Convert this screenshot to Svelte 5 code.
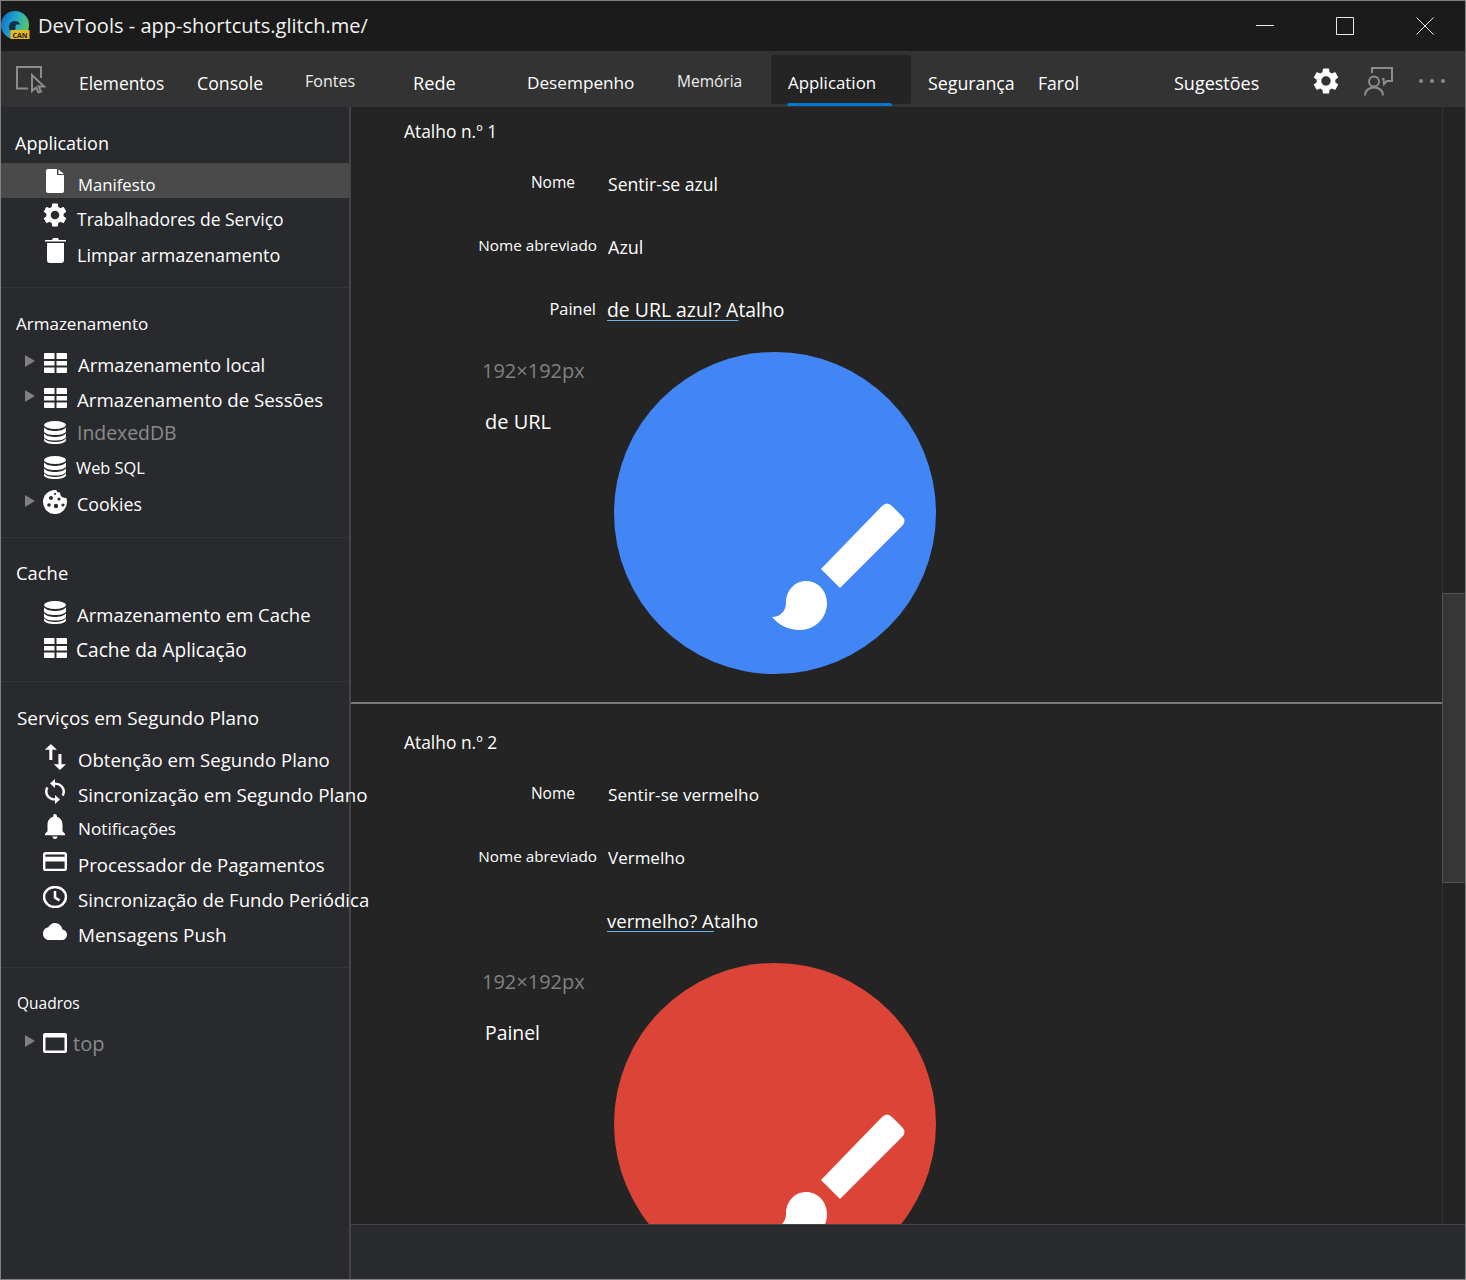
<script>
  const tabs = [
    { label: 'Elementos', w: 118, fs: 17.4 },
    { label: 'Console', w: 108, fs: 17.7 },
    { label: 'Fontes', w: 108, fs: 16, cls: 'sm' },
    { label: 'Rede', w: 114, fs: 18.2 },
    { label: 'Desempenho', w: 150, fs: 17.2 },
    { label: 'Memória', w: 111, fs: 15.5, cls: 'sm' },
    { label: 'Application', w: 140, fs: 16.9, cls: 'active' },
    { label: 'Segurança', w: 110, fs: 17.8 },
    { label: 'Farol', w: 136, fs: 17.6 },
    { label: 'Sugestões', w: 120, fs: 18 }
  ];

  const groups = [
    {
      title: 'Application', fs: 18, cls: 'first', pad: 19,
      rows: [
        { icon: 'file', label: 'Manifesto', fs: 16.7, active: true, dy: 4, dx: 1 },
        { icon: 'gear', label: 'Trabalhadores de Serviço', fs: 17.5, dy: 3 },
        { icon: 'trash', label: 'Limpar armazenamento', fs: 18.1, dy: 4 }
      ]
    },
    {
      title: 'Armazenamento', fs: 17, cls: 'low', pad: 17,
      rows: [
        { icon: 'table', label: 'Armazenamento local', fs: 18.4, arrow: true, dy: 2, dx: 1 },
        { icon: 'table', label: 'Armazenamento de Sessões', fs: 18.7, arrow: true, dy: 2 },
        { icon: 'db', label: 'IndexedDB', fs: 19.4, cls: 'dim', dy: 0 },
        { icon: 'db', label: 'Web SQL', fs: 16.4, dy: 0, dx: -1 },
        { icon: 'cookie', label: 'Cookies', fs: 17.8, arrow: true, dy: 1.5 }
      ]
    },
    {
      title: 'Cache', fs: 18.4, pad: 16,
      rows: [
        { icon: 'db', label: 'Armazenamento em Cache', fs: 18.5, dy: 2 },
        { icon: 'table', label: 'Cache da Aplicação', fs: 19.1, dy: 2, dx: -1 }
      ]
    },
    {
      title: 'Serviços em Segundo Plano', fs: 18.9, cls: 'wide low', pad: 18,
      rows: [
        { icon: 'arrows', label: 'Obtenção em Segundo Plano', fs: 18.6, dy: 3, dx: 1 },
        { icon: 'sync', label: 'Sincronização em Segundo Plano', fs: 18.8, dy: 3, dx: 1 },
        { icon: 'bell', label: 'Notificações', fs: 17.2, dy: 2.5, dx: 1 },
        { icon: 'card', label: 'Processador de Pagamentos', fs: 18.6, dy: 3, dx: 1 },
        { icon: 'clock', label: 'Sincronização de Fundo Periódica', fs: 18.6, dy: 3, dx: 1 },
        { icon: 'cloud', label: 'Mensagens Push', fs: 18.9, dy: 3, dx: 1 }
      ]
    },
    {
      title: 'Quadros', fs: 15.5, cls: 'wide', pad: 0,
      rows: [{ icon: 'frame', label: 'top', fs: 20, arrow: true, cls: 'dim', dy: 1, dx: -4 }]
    }
  ];

  const shortcuts = [
    {
      title: 'Atalho n.º 1', name: 'Sentir-se azul', nameFs: 17.6, short: 'Azul', shortFs: 18, urlLabel: 'Painel',
      linked: 'de URL azul? A', rest: 'talho', linkFs: 19.4, side: 'de URL', sideFs: 20, fill: '#4285f4'
    },
    {
      title: 'Atalho n.º 2', name: 'Sentir-se vermelho', nameFs: 17.2, short: 'Vermelho', shortFs: 17, urlLabel: '',
      linked: 'vermelho? A', rest: 'talho', linkFs: 18.6, side: 'Painel', sideFs: 19.4, fill: '#db4437'
    }
  ];

  const gearPath = 'M19.14 12.94c.04-.3.06-.61.06-.94 0-.32-.02-.64-.07-.94l2.03-1.58c.18-.14.23-.41.12-.61l-1.92-3.32c-.12-.22-.37-.29-.59-.22l-2.39.96c-.5-.38-1.03-.7-1.62-.94l-.36-2.54c-.04-.24-.24-.41-.48-.41h-3.84c-.24 0-.43.17-.47.41l-.36 2.54c-.59.24-1.13.57-1.62.94l-2.39-.96c-.22-.08-.47 0-.59.22L2.74 8.87c-.12.21-.08.47.12.61l2.03 1.58c-.05.3-.09.63-.09.94s.02.64.07.94l-2.03 1.58c-.18.14-.23.41-.12.61l1.92 3.32c.12.22.37.29.59.22l2.39-.96c.5.38 1.03.7 1.62.94l.36 2.54c.05.24.24.41.48.41h3.84c.24 0 .44-.17.47-.41l.36-2.54c.59-.24 1.13-.56 1.62-.94l2.39.96c.22.08.47 0 .59-.22l1.92-3.32c.12-.22.07-.47-.12-.61l-2.01-1.58zM12 15.6c-1.98 0-3.6-1.62-3.6-3.6s1.62-3.6 3.6-3.6 3.6 1.62 3.6 3.6-1.62 3.6-3.6 3.6z';
</script>

{#snippet icon(name)}
  {#if name === 'file'}
    <svg width="18" height="24" viewBox="0 0 18 24"><path d="M2 0h9v6h7v16a2 2 0 0 1-2 2H2a2 2 0 0 1-2-2V2a2 2 0 0 1 2-2zM12.5 0.5 18 5h-5.5z" /></svg>
  {:else if name === 'gear'}
    <svg class="lift" width="24" height="24" viewBox="2.3 2 19.4 20"><path d={gearPath} /></svg>
  {:else if name === 'trash'}
    <svg width="21" height="25" viewBox="0 0 21 25"><path d="M2 5h17v17a3 3 0 0 1-3 3H5a3 3 0 0 1-3-3zM0 2h7l1-2h5l1 2h7v1.500H0z" /></svg>
  {:else if name === 'table'}
    <svg class="shift" width="23" height="20" viewBox="0 0 23 20"><path d="M1 0h9.500v6H0V1a1 1 0 0 1 1-1zM12.500 0H22a1 1 0 0 1 1 1v5H12.500zM0 8h10.500v4.500H0zM12.500 8H23v4.500H12.500zM0 14.500h10.500V20H1a1 1 0 0 1-1-1zM12.500 14.500H23V19a1 1 0 0 1-1 1h-9.500z" /></svg>
  {:else if name === 'db'}
    <svg width="22" height="23" viewBox="0 0 22 23"><ellipse cx="11" cy="4" rx="11" ry="4" /><path d="M0 6.500C2 9 7 10 11 10s9-1 11-3.500V10c0 2.500-5 4-11 4S0 12.500 0 10zM0 12.500C2 15 7 16 11 16s9-1 11-3.500V15.500c0 2.500-5 4-11 4s-11-1.500-11-4zM0 17.500C2 20 7 21 11 21s9-1 11-3.500V19c0 2.500-5 4-11 4S0 21.500 0 19z" /></svg>
  {:else if name === 'cookie'}
    <svg class="lift" width="24" height="24" viewBox="0 0 24 24"><circle cx="12" cy="12" r="12" /><g class="cut"><circle cx="22" cy="3" r="5" /><circle cx="16" cy="0" r="2.500" /><circle cx="8" cy="8" r="2" /><circle cx="16" cy="9" r="1.600" /><circle cx="6" cy="15" r="1.800" /><circle cx="13" cy="16" r="2.200" /><circle cx="20" cy="15" r="1.600" /><circle cx="12" cy="4" r="1.100" /></g></svg>
  {:else if name === 'arrows'}
    <svg width="22" height="26" viewBox="4.500 3 14.500 18" preserveAspectRatio="none"><path d="M16 17.010V10h-2v7.010h-3L15 21l4-3.990h-3zM9 3L5 6.990h3V14h2V6.990h3L9 3z" /></svg>
  {:else if name === 'sync'}
    <svg width="20" height="25" viewBox="4 1 16 22" preserveAspectRatio="none"><path d="M12 4V1L8 5l4 4V6c3.310 0 6 2.690 6 6 0 1.010-.25 1.970-.7 2.800l1.460 1.460C19.540 15.030 20 13.570 20 12c0-4.420-3.580-8-8-8zm0 14c-3.310 0-6-2.690-6-6 0-1.010.25-1.970.7-2.800L5.240 7.740C4.460 8.970 4 10.430 4 12c0 4.420 3.580 8 8 8v3l4-4-4-4v3z" /></svg>
  {:else if name === 'bell'}
    <svg width="20" height="25" viewBox="4 2.500 16 19.500" preserveAspectRatio="none"><path d="M12 22c1.100 0 2-.9 2-2h-4c0 1.100.89 2 2 2zm6-6v-5c0-3.070-1.640-5.640-4.500-6.320V4c0-.83-.67-1.500-1.500-1.500s-1.500.67-1.500 1.500v.68C7.630 5.360 6 7.920 6 11v5l-2 2v1h16v-1l-2-2z" /></svg>
  {:else if name === 'card'}
    <svg width="24" height="19" viewBox="2 4 20 16" preserveAspectRatio="none"><path d="M20 4H4c-1.110 0-1.990.89-1.990 2L2 18c0 1.110.89 2 2 2h16c1.110 0 2-.89 2-2V6c0-1.110-.89-2-2-2zm0 14H4v-6h16v6zm0-10H4V6h16v2z" /></svg>
  {:else if name === 'clock'}
    <svg width="24" height="22" viewBox="0 0 24 22" class="line"><ellipse cx="12" cy="11" rx="11" ry="10" /><path d="M12 5v6.500l4.500 3" /></svg>
  {:else if name === 'cloud'}
    <svg width="24" height="17" viewBox="0 4 24 16" preserveAspectRatio="none"><path d="M19.350 10.040C18.670 6.590 15.640 4 12 4 9.110 4 6.600 5.640 5.350 8.040 2.340 8.360 0 10.910 0 14c0 3.310 2.690 6 6 6h13c2.760 0 5-2.240 5-5 0-2.640-2.050-4.780-4.650-4.960z" /></svg>
  {:else if name === 'frame'}
    <svg width="24" height="20" viewBox="0 0 24 20"><path d="M2 0h20a2 2 0 0 1 2 2v16a2 2 0 0 1-2 2H2a2 2 0 0 1-2-2V2a2 2 0 0 1 2-2zM2.500 4.500v13h19v-13z" fill-rule="evenodd" /></svg>
  {/if}
{/snippet}

{#snippet appIcon(fill)}
  <svg class="shortcut-icon" width="322" height="322" viewBox="0 0 322 322">
    <circle cx="161" cy="161" r="161" {fill} />
    <path fill="#fff" d="M268 154 Q273 149 278 154 L288 164 Q293 169 288 174 L226 236 L207 217 Z" />
    <path fill="#fff" d="M158 265C166 265 172 259 172 251C172 238 181 229 192 229C204 229 213 239 213 251C213 266 201 278 186 278C174 278 165 273 158 265Z" />
  </svg>
{/snippet}

<div class="window">
  <header class="titlebar">
    <svg class="logo" width="29" height="29" viewBox="0 0 29 29">
      <defs>
        <linearGradient id="edge" x1="0" y1="0.300" x2="1" y2="0.600">
          <stop offset="0" stop-color="#1270c4" />
          <stop offset="0.500" stop-color="#23a9c9" />
          <stop offset="1" stop-color="#5cc85c" />
        </linearGradient>
      </defs>
      <circle cx="14" cy="14" r="14" fill="url(#edge)" />
      <path fill="#16304a" d="M8 16c0-4 3-6 6-6s5 2 5 4c-1-1-3-1-4 0s0 3-1 5-2 4-3 3-3-3-3-6z" />
      <rect x="9.500" y="19" width="19" height="9" fill="#e8b81f" />
      <text x="19" y="26.500" class="badge">CAN</text>
    </svg>
    <span class="doc-title">DevTools - app-shortcuts.glitch.me/</span>
    <div class="win-controls">
      <svg width="18" height="18" viewBox="0 0 18 18"><path d="M0 8.500h18" /></svg>
      <svg width="18" height="18" viewBox="0 0 18 18"><path d="M.5.500h17v17H.5z" /></svg>
      <svg width="18" height="18" viewBox="0 0 18 18"><path d="M.5.500l17 17M17.500.500l-17 17" /></svg>
    </div>
  </header>

  <nav class="toolbar">
    <div class="inspect">
      <svg width="30" height="28" viewBox="0 0 30 28"><path class="stroke" d="M12 22.500H1V1h24v11" /><path class="stroke" d="M16 9v16l4-3.500 2.500 5 2.500-1-2.500-5H28z" /></svg>
    </div>
    {#each tabs as tab}
      <div class="tab {tab.cls ?? ''}" style="width:{tab.w}px;font-size:{tab.fs}px"><span>{tab.label}</span></div>
    {/each}
    <div class="tools">
      <svg class="tool-gear" width="26" height="26" viewBox="2.300 2 19.400 20"><path d={gearPath} /></svg>
      <svg class="tool-feedback" width="29" height="29" viewBox="0 0 29 29"><path d="M8 6V1h20v13h-5l-3 3-.500-5H18" /><circle cx="10" cy="14.500" r="5" /><path d="M1 28.500c0-5 4-8 9-8s9 3 9 8" /></svg>
      <div class="dots"><i></i><i></i><i></i></div>
    </div>
  </nav>

  <div class="body">
    <aside class="sidebar">
      {#each groups as group}
        <section class="group" style="padding-bottom:{group.pad}px">
          <h3 class={group.cls ?? ''} style="font-size:{group.fs}px">{group.title}</h3>
          {#each group.rows as row}
            <div class="row" class:active={row.active}>
              <span class="arrow">{#if row.arrow}<i></i>{/if}</span>
              <span class="ico">{@render icon(row.icon)}</span>
              <span class="label {row.cls ?? ''}" style="margin:{row.dy * 2}px 0 0 {row.dx ?? 0}px;font-size:{row.fs}px">{row.label}</span>
            </div>
          {/each}
        </section>
      {/each}
    </aside>

    <main class="main">
      <div class="pane">
        <div class="scroll">
          <div class="sheet">
            {#each shortcuts as s}
              <section class="shortcut">
                <div class="sc-title">{s.title}</div>
                <div class="field">
                  <span class="key indent">Nome</span>
                  <span class="val" style="font-size:{s.nameFs}px">{s.name}</span>
                </div>
                <div class="field">
                  <span class="key abbr">Nome abreviado</span>
                  <span class="val" style="font-size:{s.shortFs}px">{s.short}</span>
                </div>
                <div class="field">
                  <span class="key tight">{s.urlLabel}</span>
                  <span class="val link" style="font-size:{s.linkFs}px"><u>{s.linked}</u>{s.rest}</span>
                </div>
                <div class="icon-row">
                  <div class="icon-meta">
                    <div class="px">192×192px</div>
                    <div class="side" style="font-size:{s.sideFs}px">{s.side}</div>
                  </div>
                  {@render appIcon(s.fill)}
                </div>
              </section>
            {/each}
          </div>
        </div>
        <div class="scrollbar"><div class="thumb"></div></div>
      </div>
      <div class="footer"></div>
    </main>
  </div>
</div>

<style>
  :global(body) {
    margin: 0;
    background: #242424;
  }

  .window {
    box-sizing: border-box;
    width: 1466px;
    height: 1280px;
    display: flex;
    flex-direction: column;
    border: 1px solid #808080;
    color: #fff;
    font-family: "Open Sans", "Noto Sans", sans-serif;
    font-size: 18px;
    overflow: hidden;
  }

  .titlebar {
    height: 50px;
    flex: none;
    display: flex;
    align-items: center;
    background: #1b1b1b;
  }

  .logo {
    flex: none;
    margin-top: -2px;
  }

  .badge {
    font-size: 7px;
    font-weight: 700;
    fill: #222;
    text-anchor: middle;
  }

  .doc-title {
    margin: -2px 0 0 8px;
    font-size: 20.05px;
    color: #f2f2f2;
  }

  .win-controls {
    margin-left: auto;
    display: flex;
    gap: 62px;
    padding-right: 31px;
  }

  .win-controls path {
    fill: none;
    stroke: #e8e8e8;
    stroke-width: 1;
  }

  .toolbar {
    height: 56px;
    flex: none;
    display: flex;
    background: #333;
  }

  .inspect {
    width: 61px;
    flex: none;
    padding: 15px 0 0 15px;
    box-sizing: border-box;
  }

  .stroke {
    fill: none;
    stroke: #8c8c8c;
    stroke-width: 2;
  }

  .tab {
    flex: none;
    box-sizing: border-box;
    padding: 20px 0 0 17px;
    line-height: 24px;
    white-space: nowrap;
    position: relative;
  }

  .tab.sm {
    padding-top: 18px;
    color: #eee;
  }

  .tab.active {
    background: #242424;
    height: 49px;
    margin-top: 4px;
    padding-top: 16px;
    border-radius: 3px;
  }

  .tab.active::after {
    content: "";
    position: absolute;
    left: 16px;
    right: 19px;
    bottom: -2px;
    height: 3px;
    border-radius: 2px;
    background: #0078d4;
  }

  .tools {
    margin-left: auto;
    display: flex;
    align-items: center;
    padding-right: 20px;
  }

  .tool-gear {
    fill: #fff;
    margin: 4px 0 0 0;
  }

  .tool-feedback {
    margin: 4px 0 0 25px;
  }

  .tool-feedback path,
  .tool-feedback circle {
    fill: none;
    stroke: #8c8c8c;
    stroke-width: 2;
  }

  .dots {
    display: flex;
    gap: 7px;
    margin: 4px 0 0 26px;
  }

  .dots i {
    width: 4px;
    height: 4px;
    border-radius: 50%;
    background: #8c8c8c;
  }

  .body {
    flex: 1;
    min-height: 0;
    display: flex;
  }

  .sidebar {
    width: 350px;
    flex: none;
    box-sizing: border-box;
    background: #292a2d;
    border-right: 2px solid #454545;
    position: relative;
    z-index: 1;
  }

  .group {
    border-bottom: 1px solid #333438;
  }

  .group:last-child {
    border-bottom: none;
  }

  h3 {
    margin: 0;
    height: 57px;
    box-sizing: border-box;
    padding: 25px 0 0 15px;
    font-weight: 400;
    line-height: 20px;
  }

  h3.first {
    height: 56px;
    padding: 26px 0 0 14px;
  }

  h3.low {
    padding-top: 26px;
  }

  h3.wide {
    padding-left: 16px;
  }

  .row {
    height: 35px;
    display: flex;
    align-items: center;
    padding-left: 24px;
    white-space: nowrap;
  }

  .row.active {
    background: #4a4a4a;
  }

  .arrow {
    width: 18px;
    flex: none;
    display: flex;
    margin-top: -3px;
  }

  .arrow i {
    width: 0;
    height: 0;
    border-left: 10px solid #7f7f7f;
    border-top: 6.5px solid transparent;
    border-bottom: 6.5px solid transparent;
  }

  .ico {
    width: 24px;
    height: 26px;
    flex: none;
    display: flex;
    align-items: center;
    justify-content: center;
  }

  .ico svg {
    fill: #fff;
    flex: none;
  }

  .ico .shift {
    margin-left: 1px;
  }

  .ico .lift {
    margin-top: -2px;
  }

  .ico .line {
    fill: none;
    stroke: #fff;
    stroke-width: 2.500;
  }

  .cut circle {
    fill: #292a2d;
  }

  .label {
    padding-left: 10px;
    line-height: 22px;
  }

  .label.dim {
    color: #8a8a8a;
  }

  .main {
    flex: 1;
    min-width: 0;
    display: flex;
    flex-direction: column;
  }

  .pane {
    flex: 1;
    min-height: 0;
    display: flex;
    background: #242424;
  }

  .scroll {
    flex: 1;
    min-width: 0;
    overflow: hidden;
  }

  .sheet {
    margin-top: -14px;
  }

  .shortcut {
    height: 609px;
    padding-left: 53px;
    border-bottom: 2px solid #7a7a7a;
  }

  .sc-title {
    padding-top: 28px;
    height: 31px;
    line-height: 20px;
    font-size: 17.4px;
  }

  .field {
    height: 63px;
    display: flex;
    align-items: center;
    gap: 11px;
  }

  .key {
    width: 193px;
    flex: none;
    box-sizing: border-box;
    text-align: right;
    font-size: 15.500px;
    margin-top: -3px;
  }

  .key.abbr {
    font-size: 15.300px;
  }

  .key.indent {
    padding-right: 22px;
  }

  .key.tight {
    padding-right: 1px;
    font-size: 16.400px;
  }

  .val.link {
    margin-left: -1px;
  }

  u {
    text-decoration-color: #6db5e8;
    text-underline-offset: 3px;
  }

  .icon-row {
    margin-top: 11px;
    display: flex;
  }

  .icon-meta {
    width: 210px;
    flex: none;
    box-sizing: border-box;
    padding: 5px 0 0 78px;
  }

  .px {
    font-size: 20px;
    line-height: 28px;
    color: #808080;
  }

  .side {
    margin: 24px 0 0 3px;
    line-height: 26px;
  }

  .shortcut-icon {
    flex: none;
    display: block;
  }

  .scrollbar {
    width: 23px;
    flex: none;
    box-sizing: border-box;
    border-left: 1px solid #333;
    padding-top: 486px;
  }

  .thumb {
    height: 290px;
    box-sizing: border-box;
    background: #363636;
    border: 1px solid #555;
    border-right: none;
    border-radius: 2px;
    margin-left: -1px;
  }

  .footer {
    height: 55px;
    flex: none;
    box-sizing: border-box;
    background: #292a2d;
    border-top: 1px solid #454545;
  }
</style>
